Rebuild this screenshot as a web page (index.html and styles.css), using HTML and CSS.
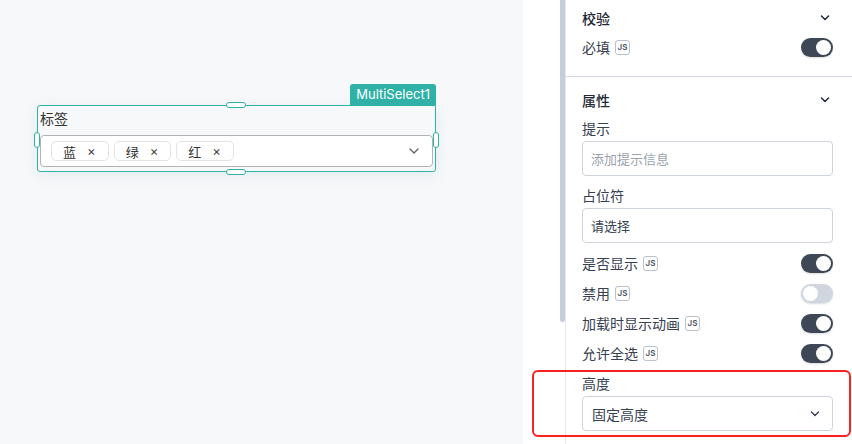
FILE: index.html
```html
<!DOCTYPE html>
<html>
<head>
  <meta charset="utf-8">
  <meta name="viewport" content="width=device-width, initial-scale=1">
  <title>MultiSelect - 属性</title>
  <link rel="stylesheet" href="styles.css">
</head>
<body>
  <div class="app">
    <div class="canvas">
      <div class="widget">
        <div class="widget-tab">MultiSelect1</div>
        <span class="handle handle-top"></span>
        <span class="handle handle-bottom"></span>
        <span class="handle handle-left"></span>
        <span class="handle handle-right"></span>
        <div class="widget-label">标签</div>
        <div class="ms-select">
          <div class="tags">
            <span class="tag">蓝<span class="tag-x">×</span></span>
            <span class="tag">绿<span class="tag-x">×</span></span>
            <span class="tag">红<span class="tag-x">×</span></span>
          </div>
          <svg class="ms-chevron" width="10" height="6" viewBox="0 0 10 6"><path d="M1 1l4 4 4-4" fill="none" stroke="#666" stroke-width="1.4" stroke-linecap="round" stroke-linejoin="round"/></svg>
        </div>
      </div>
    </div>

    <div class="panel">
      <div class="scrollbar"><div class="thumb"></div></div>
      <div class="props">
        <section class="group">
          <div class="group-head">
            <span>校验</span>
            <svg width="10" height="6" viewBox="0 0 10 6"><path d="M1.5 1l3.5 3.5 3.5-3.5" fill="none" stroke="#1f2937" stroke-width="1.5" stroke-linecap="round" stroke-linejoin="round"/></svg>
          </div>
          <div class="row">
            <span class="row-label">必填<span class="js">JS</span></span>
            <span class="toggle on"></span>
          </div>
        </section>

        <section class="group">
          <div class="group-head">
            <span>属性</span>
            <svg width="10" height="6" viewBox="0 0 10 6"><path d="M1.5 1l3.5 3.5 3.5-3.5" fill="none" stroke="#1f2937" stroke-width="1.5" stroke-linecap="round" stroke-linejoin="round"/></svg>
          </div>
          <div class="field">
            <div class="field-label">提示</div>
            <div class="text-input placeholder">添加提示信息</div>
          </div>
          <div class="field">
            <div class="field-label">占位符</div>
            <div class="text-input">请选择</div>
          </div>
          <div class="toggles">
            <div class="row">
              <span class="row-label">是否显示<span class="js">JS</span></span>
              <span class="toggle on"></span>
            </div>
            <div class="row">
              <span class="row-label">禁用<span class="js">JS</span></span>
              <span class="toggle"></span>
            </div>
            <div class="row">
              <span class="row-label">加载时显示动画<span class="js">JS</span></span>
              <span class="toggle on"></span>
            </div>
            <div class="row">
              <span class="row-label">允许全选<span class="js">JS</span></span>
              <span class="toggle on"></span>
            </div>
          </div>
          <div class="field field-height">
            <div class="field-label">高度</div>
            <div class="text-input select-input">
              <span>固定高度</span>
              <svg width="10" height="6" viewBox="0 0 10 6"><path d="M1.5 1l3.5 3.5 3.5-3.5" fill="none" stroke="#374151" stroke-width="1.4" stroke-linecap="round" stroke-linejoin="round"/></svg>
            </div>
          </div>
        </section>
      </div>
      <div class="highlight"></div>
    </div>
  </div>
</body>
</html>
```

FILE: styles.css
```css
body {
  font-family: Inter, "Noto Sans CJK SC", sans-serif;
  margin: 0;
  color: #374151;
  font-size: 14px;
}

.app {
  display: flex;
  width: 852px;
  height: 444px;
  overflow: hidden;
}

/* canvas */

.canvas {
  width: 523px;
  flex: none;
  background: #f7f8fa;
  position: relative;
}

.widget {
  position: absolute;
  left: 37px;
  top: 105px;
  width: 399px;
  box-sizing: border-box;
  border: 1px solid #2fb1a7;
  border-radius: 3px;
  border-top-right-radius: 0;
  padding: 0 2px 4px 2px;
  box-shadow: 0 3px 16px rgba(47, 120, 130, 0.1);
}

.widget-tab {
  position: absolute;
  right: -1px;
  top: -22px;
  height: 21px;
  padding: 0 6px;
  background: #2fb1a7;
  color: white;
  font-size: 13px;
  line-height: 21px;
  border-radius: 3px 3px 0 0;
}

.handle {
  position: absolute;
  background: white;
  border: 1px solid #2fb1a7;
  border-radius: 4px;
  box-sizing: border-box;
}

.handle-top, .handle-bottom {
  width: 20px;
  height: 6px;
  left: 188px;
}

.handle-top {
  top: -4px;
}

.handle-bottom {
  bottom: -4px;
}

.handle-left, .handle-right {
  width: 6px;
  height: 16px;
  top: 26px;
}

.handle-left {
  left: -4px;
}

.handle-right {
  right: -4px;
}

.widget-label {
  height: 26px;
  line-height: 26px;
  font-size: 14px;
  color: #333;
  margin-bottom: 3px;
}

.ms-select {
  height: 32px;
  box-sizing: border-box;
  border: 1px solid #b3b3b3;
  border-radius: 4px;
  background: white;
  display: flex;
  align-items: center;
  justify-content: space-between;
  padding: 0 13px 0 10px;
}

.tags {
  display: flex;
  gap: 5px;
}

.tag {
  display: flex;
  align-items: center;
  gap: 11px;
  height: 20px;
  box-sizing: border-box;
  padding: 0 12px 0 11px;
  border: 1px solid #e3e3e3;
  border-radius: 5px;
  font-size: 13px;
  color: #333;
}

.tag-x {
  font-size: 13px;
  color: #444;
}

/* panel */

.panel {
  flex: 1;
  display: flex;
  background: white;
  position: relative;
  padding-left: 37px;
}

.scrollbar {
  width: 5px;
  flex: none;
}

.thumb {
  height: 322px;
  background: #c6ceda;
  border-radius: 0 0 2px 2px;
}

.props {
  flex: 1;
  border-left: 1px solid #e3e6eb;
}

.group {
  padding: 0 19px 0 16px;
}

.group + .group {
  border-top: 1px solid #d3d9e2;
  padding-top: 5px;
}

.group:first-child {
  padding-bottom: 18px;
}

.group-head {
  height: 36px;
  display: flex;
  align-items: center;
  justify-content: space-between;
  padding-right: 3px;
  font-weight: 500;
  color: #1f2937;
  font-size: 14px;
}

.row {
  height: 30px;
  display: flex;
  align-items: center;
  justify-content: space-between;
}

.group:first-child .row {
  height: 22px;
}

.row-label {
  display: flex;
  align-items: center;
  gap: 5px;
}

.js {
  width: 15px;
  height: 15px;
  box-sizing: border-box;
  border: 1px solid #b9c1cd;
  border-radius: 3px;
  font-size: 8px;
  font-weight: 600;
  color: #4b5563;
  display: flex;
  align-items: center;
  justify-content: center;
  letter-spacing: 0.2px;
}

.toggle {
  width: 32px;
  height: 19px;
  border-radius: 10px;
  background: #cfd6e0;
  position: relative;
  box-shadow: 0 1px 2px rgba(0, 0, 0, 0.15);
}

.toggle::after {
  content: "";
  position: absolute;
  top: 2px;
  left: 2px;
  width: 15px;
  height: 15px;
  border-radius: 50%;
  background: white;
}

.toggle.on {
  background: #3e4755;
}

.toggle.on::after {
  left: 15px;
}

.field {
  margin-bottom: 9px;
}

.field-label {
  height: 22px;
  line-height: 22px;
  margin-bottom: 1px;
}

.text-input {
  height: 35px;
  box-sizing: border-box;
  border: 1px solid #cdd4de;
  border-radius: 4px;
  padding: 0 8px;
  display: flex;
  align-items: center;
  font-size: 13px;
  color: #374151;
}

.text-input.placeholder {
  color: #9aa3af;
}

.toggles {
  margin-top: -4px;
}

.field-height {
  margin-top: 5px;
}

.select-input {
  justify-content: space-between;
  padding: 0 12px 0 9px;
  font-size: 14px;
}

.highlight {
  position: absolute;
  left: 9px;
  top: 370px;
  width: 319px;
  height: 67px;
  box-sizing: border-box;
  border: 2px solid #ff1f1f;
  border-radius: 6px;
}
```
